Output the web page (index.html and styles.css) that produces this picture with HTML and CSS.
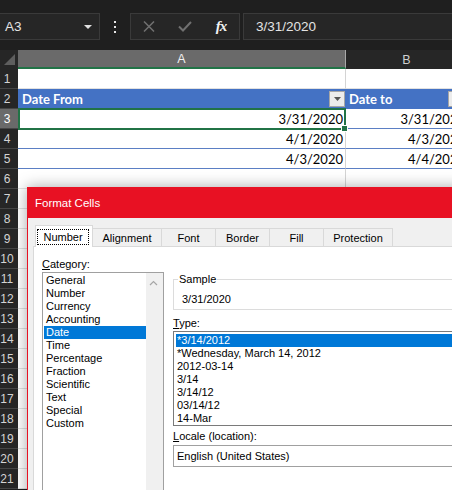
FILE: index.html
```html
<!DOCTYPE html>
<html>
<head>
<meta charset="utf-8">
<link rel="stylesheet" href="styles.css">
</head>
<body>
<div class="fbar">
  <div class="namebox"><span>A3</span><svg width="8" height="4" viewBox="0 0 8 4"><polygon points="0,0 8,0 4,4" fill="#e0e0e0"/></svg></div>
  <div class="dots"><svg width="2" height="12" viewBox="0 0 2 12"><rect x="0" y="0" width="2" height="2" fill="#e6e6e6"/><rect x="0" y="5" width="2" height="2" fill="#e6e6e6"/><rect x="0" y="10" width="2" height="2" fill="#e6e6e6"/></svg></div>
  <div class="btns">
    <span class="slot"><svg width="12" height="11" viewBox="0 0 12 11"><path d="M1 0.5 L11 10.5 M11 0.5 L1 10.5" stroke="#707070" stroke-width="1.5" fill="none"/></svg></span>
    <span class="slot"><svg width="14" height="11" viewBox="0 0 14 11"><polyline points="1,5.5 5,9.5 13,1" stroke="#707070" stroke-width="2" fill="none"/></svg></span>
    <span class="slot fx">fx</span>
  </div>
  <div class="formula">3/31/2020</div>
</div>

<div class="sheet">
  <div class="corner"><svg width="18" height="19" viewBox="0 0 18 19"><polygon points="15,4 15,15 4,15" fill="#5e5e5e"/></svg></div>
  <div class="colh a">A</div>
  <div class="colh b">B</div>

  <div class="rh">1</div><div class="c a"></div><div class="c b"></div>
  <div class="rh">2</div>
  <div class="c a hd"><span>Date From</span><span class="fbtn"><svg width="7" height="4" viewBox="0 0 7 4"><polygon points="0,0 7,0 3.5,4" fill="#555"/></svg></span></div>
  <div class="c b hd"><span>Date to</span><span class="fbtn"><svg width="7" height="4" viewBox="0 0 7 4"><polygon points="0,0 7,0 3.5,4" fill="#555"/></svg></span></div>
  <div class="rh sel">3</div><div class="c a tb act">3/31/2020<span class="handle"></span></div><div class="c b tb">3/31/2020</div>
  <div class="rh">4</div><div class="c a tb">4/1/2020</div><div class="c b tb">4/3/2020</div>
  <div class="rh">5</div><div class="c a tb">4/3/2020</div><div class="c b tb">4/4/2020</div>
  <div class="rh">6</div><div class="c a"></div><div class="c b"></div>
  <div class="rh">7</div><div class="c a"></div><div class="c b"></div>
  <div class="rh">8</div><div class="c a"></div><div class="c b"></div>
  <div class="rh">9</div><div class="c a"></div><div class="c b"></div>
  <div class="rh">10</div><div class="c a"></div><div class="c b"></div>
  <div class="rh">11</div><div class="c a"></div><div class="c b"></div>
  <div class="rh">12</div><div class="c a"></div><div class="c b"></div>
  <div class="rh">13</div><div class="c a"></div><div class="c b"></div>
  <div class="rh">14</div><div class="c a"></div><div class="c b"></div>
  <div class="rh">15</div><div class="c a"></div><div class="c b"></div>
  <div class="rh">16</div><div class="c a"></div><div class="c b"></div>
  <div class="rh">17</div><div class="c a"></div><div class="c b"></div>
  <div class="rh">18</div><div class="c a"></div><div class="c b"></div>
  <div class="rh">19</div><div class="c a"></div><div class="c b"></div>
  <div class="rh">20</div><div class="c a"></div><div class="c b"></div>
  <div class="rh">21</div><div class="c a"></div><div class="c b"></div>
</div>

<div class="dialog">
  <div class="dtitle">Format Cells</div>
  <div class="tabs">
    <div class="tab sel"><span class="focus">Number</span></div>
    <div class="tab w69">Alignment</div>
    <div class="tab w54">Font</div>
    <div class="tab w54">Border</div>
    <div class="tab w54">Fill</div>
    <div class="tab w69">Protection</div>
  </div>
  <div class="panel">
    <div class="left">
      <div class="lbl"><span class="u">C</span>ategory:</div>
      <div class="catlist">
        <div class="items">
          <div class="item">General</div>
          <div class="item">Number</div>
          <div class="item">Currency</div>
          <div class="item">Accounting</div>
          <div class="item sel">Date</div>
          <div class="item">Time</div>
          <div class="item">Percentage</div>
          <div class="item">Fraction</div>
          <div class="item">Scientific</div>
          <div class="item">Text</div>
          <div class="item">Special</div>
          <div class="item">Custom</div>
        </div>
        <div class="scroll"><svg width="17" height="17" viewBox="0 0 17 17"><polyline points="4,12 7.5,8.5 11,12" stroke="#a6a6a6" stroke-width="1.2" fill="none"/></svg></div>
      </div>
    </div>
    <div class="right">
      <fieldset class="sample">
        <legend>Sample</legend>
        <div class="sval">3/31/2020</div>
      </fieldset>
      <div class="lbl2"><span class="u">T</span>ype:</div>
      <div class="typelist">
        <div class="titem sel">*3/14/2012</div>
        <div class="titem">*Wednesday, March 14, 2012</div>
        <div class="titem">2012-03-14</div>
        <div class="titem">3/14</div>
        <div class="titem">3/14/12</div>
        <div class="titem">03/14/12</div>
        <div class="titem">14-Mar</div>
      </div>
      <div class="lbl3"><span class="u">L</span>ocale (location):</div>
      <div class="select">English (United States)</div>
    </div>
  </div>
</div>
</body>
</html>
```

FILE: styles.css
```css
* { box-sizing: border-box; }
html, body { margin: 0; padding: 0; }
body {
  width: 452px;
  height: 490px;
  overflow: hidden;
  position: relative;
  background: #1f1f1f;
  font-family: "Liberation Sans", Arial, sans-serif;
}

/* formula bar */
.fbar { display: flex; height: 27px; margin-top: 13px; }
.namebox {
  width: 100px; flex: none;
  background: #262626; border: 1px solid #3a3a3a; border-left: 0;
  display: flex; align-items: center; justify-content: space-between;
  padding: 0 7px 0 5px;
  color: #e3e3e3; font-size: 13.5px;
}
.dots { width: 30px; flex: none; display: flex; align-items: center; justify-content: center; }
.btns {
  width: 110px; flex: none;
  background: #262626; border: 1px solid #3a3a3a;
  display: flex; align-items: center;
}
.slot { width: 36px; display: flex; align-items: center; justify-content: center; }
.fx { font-family: "Liberation Serif", serif; font-style: italic; font-size: 15px; color: #f2f2f2; font-weight: 700; letter-spacing: -1px; }
.formula {
  flex: 1; margin-left: 3px;
  background: #262626; border: 1px solid #3a3a3a; border-right: 0;
  display: flex; align-items: center; padding-left: 12px;
  color: #e3e3e3; font-size: 13.5px;
}

/* sheet */
.sheet {
  display: grid;
  grid-template-columns: 18px 328px 121px;
  grid-template-rows: 19px;
  grid-auto-rows: 20px;
  margin-top: 10px;
}
.corner { background: #262626; }
.corner svg { display: block; }
.colh { display: flex; align-items: center; justify-content: center; font-size: 12.5px; }
.colh.a { background: #6a6a6a; color: #f0f0f0; border-bottom: 2px solid #217346; border-right: 1px solid #a8a8a8; }
.colh.b { background: #262626; color: #d0d0d0; }
.rh {
  background: #262626; color: #d4d4d4; font-size: 12px;
  border-bottom: 1px solid #454545;
  display: flex; align-items: center; justify-content: center; padding-right: 4px;
}
.rh.sel { background: #6a6a6a; color: #ffffff; }
.c {
  background: #fff; border-bottom: 1px solid #e1e1e1;
  font-family: Lato, "Liberation Sans", sans-serif; font-size: 13px; color: #000;
  display: flex; align-items: center; justify-content: flex-end;
  padding-right: 2px; white-space: nowrap;
}
.c.a { border-right: 1px solid #d4d4d4; }
.c.tb { border-bottom-color: #5b7fc4; }
.c.hd {
  background: #4472c4; color: #fff; font-weight: 700;
  border-bottom-color: #4472c4;
  justify-content: space-between; padding-left: 4px; padding-right: 0;
}
.c.a.hd { border-right-color: #4472c4; }
.c.b.hd { padding-left: 3px; padding-right: 3px; }
.fbtn {
  width: 16px; height: 16px; background: #ececec; border: 1px solid #a6a6a6;
  display: flex; align-items: center; justify-content: center;
}
.fbtn svg { display: block; }
.act { position: relative; }
.act::after {
  content: ""; position: absolute;
  left: 0; top: -1px; right: -1px; bottom: -2px;
  border: 2px solid #217346;
}
.handle {
  position: absolute; right: -3px; bottom: -4px;
  width: 7px; height: 7px; background: #217346; border: 1px solid #fff;
  z-index: 2;
}

/* dialog */
.dialog {
  position: absolute; left: 27px; top: 187px;
  width: 460px; height: 330px;
  background: #f0f0f0; border: 1px solid #e81123;
  box-shadow: 0 0 14px rgba(0, 0, 0, 0.35);
  font-size: 11px; color: #000;
}
.dtitle {
  height: 30px; background: #e81123; color: #fff; font-size: 11.5px;
  display: flex; align-items: center; padding-left: 7px;
}
.tabs {
  display: flex; align-items: flex-end;
  height: 21px; margin: 7px 0 0 7px;
  position: relative; z-index: 1;
}
.tab {
  height: 18px; background: #f0f0f0;
  border-top: 1px solid #d9d9d9; border-right: 1px solid #d9d9d9;
  display: flex; align-items: center; justify-content: center;
}
.w69 { width: 69px; }
.w54 { width: 54px; }
.tab.sel {
  width: 58px; height: 22px; margin-bottom: -1px;
  background: #fff; border: 1px solid #d9d9d9; border-bottom: 0;
  align-items: stretch;
}
.focus {
  flex: 1; margin: 3px 3px 2px 1px;
  border: 1px dotted #000;
  display: flex; align-items: center; justify-content: center;
}
.panel {
  margin-left: 5px; height: 270px;
  background: #fff; border: 1px solid #d9d9d9;
  display: flex; align-items: flex-start;
  padding: 9px 0 0 8px;
}
.u { text-decoration: underline; }
.left { width: 122px; flex: none; }
.lbl { height: 16px; line-height: 16px; }
.catlist { height: 230px; border: 1px solid #a0a0a0; display: flex; }
.items { width: 103px; padding: 1px 0 0 1px; }
.item { height: 13px; line-height: 13px; padding-left: 2px; white-space: nowrap; }
.item.sel, .titem.sel { background: #0078d7; color: #fff; }
.scroll { width: 17px; background: #f0f0f0; }
.scroll svg { display: block; }
.right { width: 290px; flex: none; margin-left: 9px; }
.sample {
  margin: 16px 0 0; padding: 0 0 2px 4px;
  border: 1px solid #dcdcdc; min-width: 0;
}
.sample legend { padding: 0 1px; line-height: 14px; font-size: 11px; }
.sval { margin: 5px 0 0 4px; line-height: 16px; }
.lbl2 { margin-top: 6px; line-height: 14px; }
.typelist { margin-top: 1px; height: 95px; border: 1px solid #7a7a7a; padding: 2px 0 0 2px; }
.titem { height: 13px; line-height: 13px; padding-left: 1px; white-space: nowrap; }
.lbl3 { margin-top: 3px; line-height: 14px; }
.select { margin-top: 2px; height: 22px; border: 1px solid #a0a0a0; padding-left: 3px; line-height: 20px; }
```
